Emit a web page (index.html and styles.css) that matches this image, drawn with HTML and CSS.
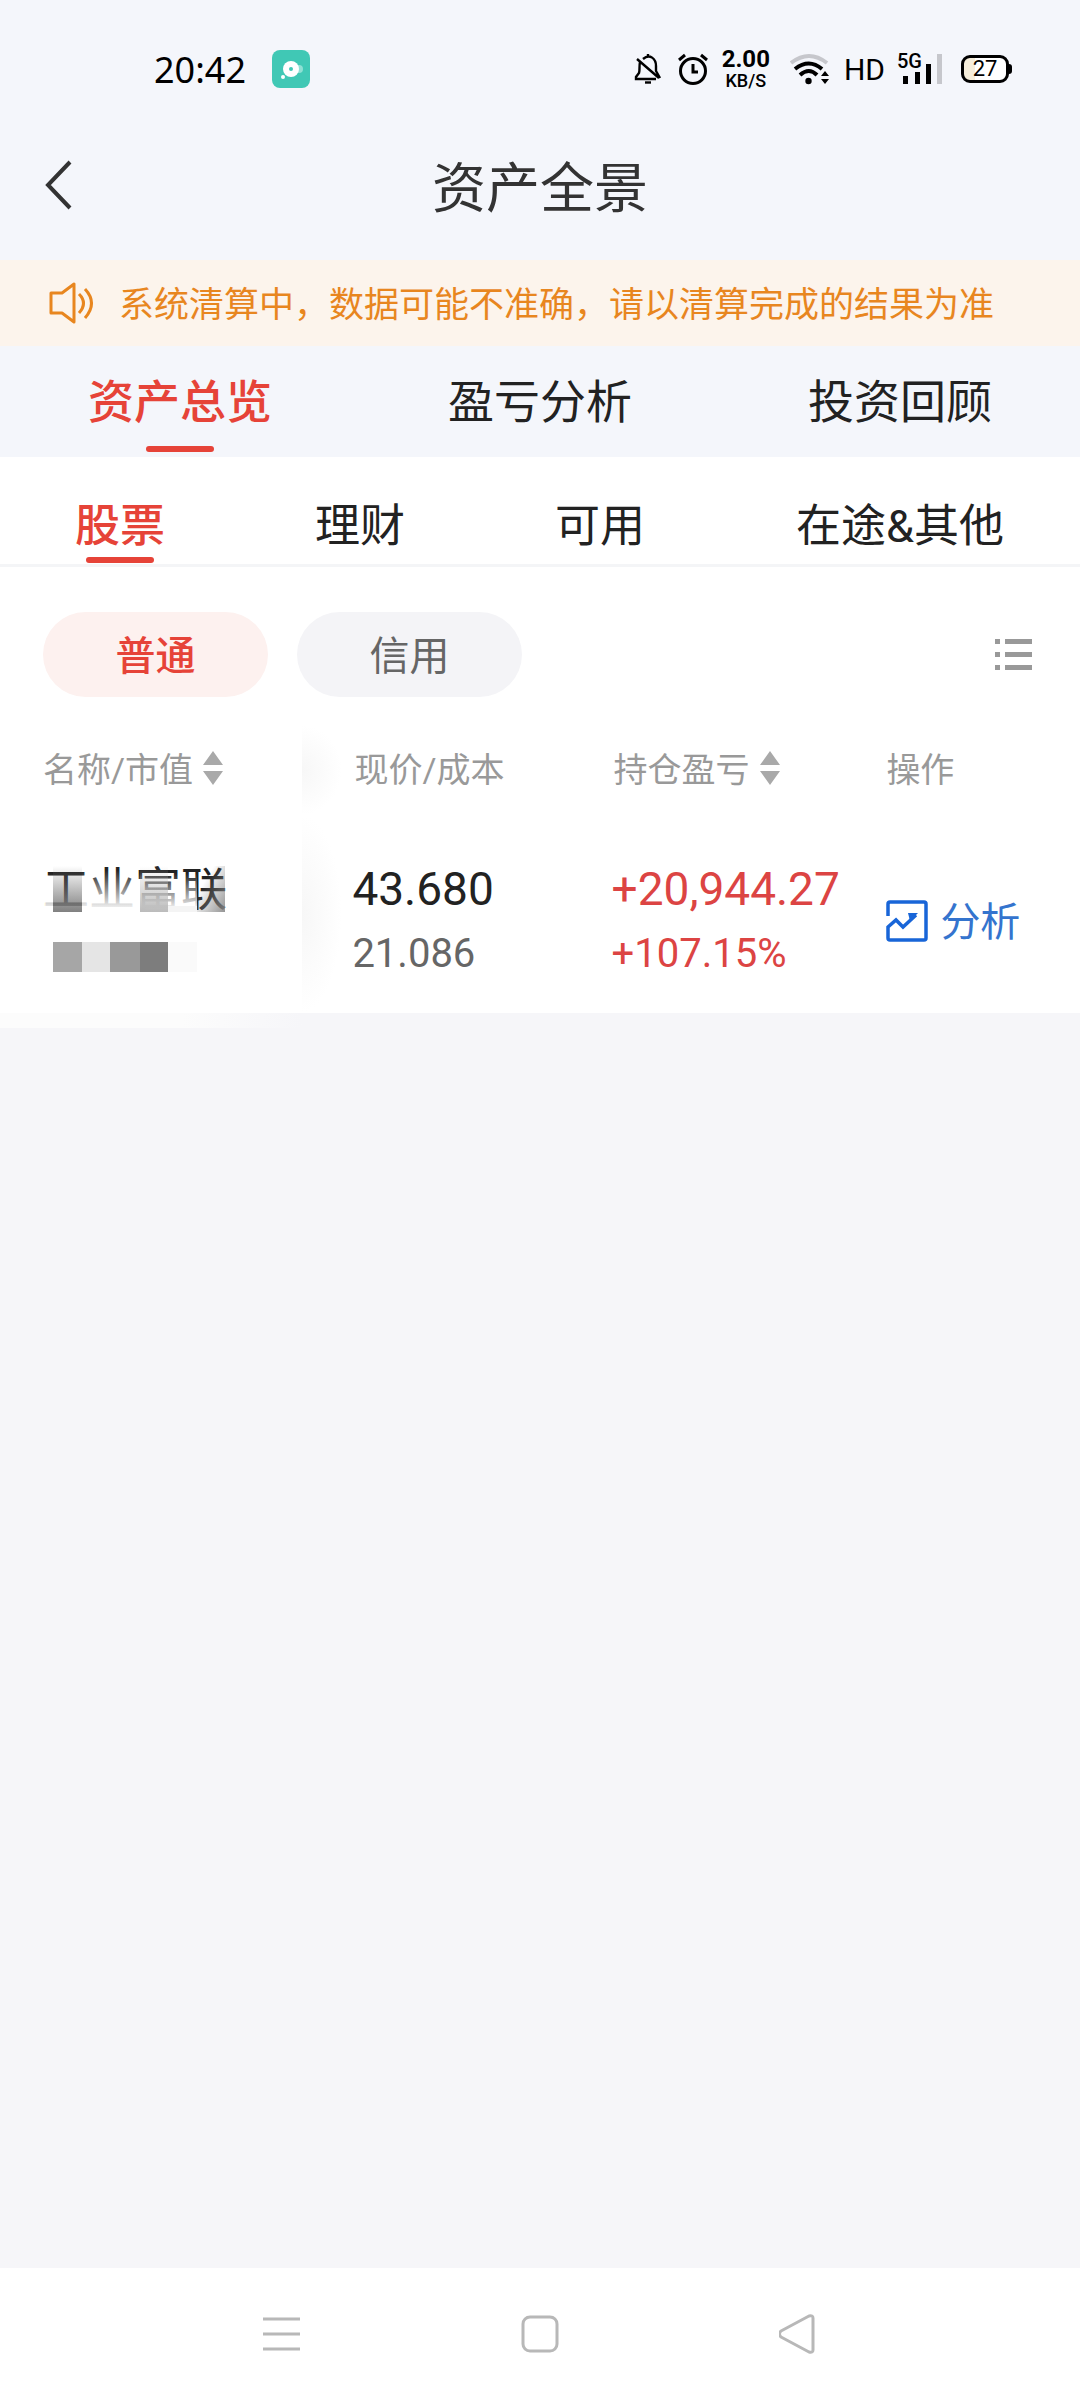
FILE: index.html
```html
<!DOCTYPE html>
<html lang="zh-CN">
<head>
    <meta charset="UTF-8">
    <meta name="viewport" content="width=device-width, initial-scale=1.0">
    <title>资产全景</title>
    <link rel="stylesheet" href="styles.css">
</head>
<body>
    <div class="status-bar">
        <div class="status-left">
            <span class="time">20:42</span>
            <svg width="38" height="38" viewBox="0 0 38 38">
                <rect width="38" height="38" rx="8" fill="#40c8b5"/>
                <circle cx="27" cy="19" r="4" fill="#8fe0d4"/>
                <circle cx="19" cy="19" r="8" fill="#fff"/>
                <circle cx="11" cy="27" r="2" fill="#fff"/>
                <circle cx="19" cy="19" r="2" fill="#40c8b5"/>
            </svg>
        </div>
        <div class="status-right">
            <svg class="bell" width="28" height="32" viewBox="0 0 28 32" fill="none" stroke="#000" stroke-width="2.4">
                <path d="M9 6C16 0 22 6 22 13v5l4 7M6 9c-1 4 0 8-1 11l-3 4v2h20M3 6l22 19M14 1v3"/>
                <path d="M11 29.500h6"/>
            </svg>
            <svg class="alarm" width="30" height="32" viewBox="0 0 30 32" fill="none" stroke="#000" stroke-width="3">
                <circle cx="15" cy="18" r="12.500"/>
                <path d="M15 11v8h5M1 7l6-5M29 7l-6-5"/>
            </svg>
            <div class="speed">
                <span class="speed-value">2.00</span>
                <span class="speed-unit">KB/S</span>
            </div>
            <svg class="wifi" width="40" height="32" viewBox="0 0 40 32" fill="none" stroke="#000" stroke-width="4">
                <path d="M1 10Q19-4 37 10" stroke="#c6c7cc"/>
                <path d="M5 16q14-11 27 0M10 22q9-8 17 0"/>
                <circle cx="18.500" cy="28" r="3.200" fill="#000" stroke="none"/>
                <path d="M31 23l4-5 4 5zM31 26l4 5 4-5z" fill="#000" stroke="none"/>
            </svg>
            <span class="hd">HD</span>
            <div class="signal">
                <span class="signal-type">5G</span>
                <svg width="46" height="32" viewBox="0 0 46 32">
                    <path d="M6 23h5v8H6zM18 19h5v12h-5zM29 11h5v20h-5z"/>
                    <path d="M40 1h5v30h-5z" fill="#c6c7cc"/>
                </svg>
            </div>
            <div class="battery">27</div>
        </div>
    </div>

    <header class="header">
        <button class="back-btn" aria-label="返回">
            <svg width="28" height="50" viewBox="0 0 28 50" fill="none" stroke="#333" stroke-width="4">
                <path d="M25 2L3 25l22 23"/>
            </svg>
        </button>
        <h1>资产全景</h1>
    </header>

    <div class="notice">
        <svg width="46" height="42" viewBox="0 0 46 42" fill="none" stroke="#e8861f" stroke-width="3" stroke-linejoin="round">
            <path d="M2 11h11L25 2v38L13 31H2zM30 12q9 9 0 19M36 7q13 14 0 29"/>
        </svg>
        <p>系统清算中，数据可能不准确，请以清算完成的结果为准</p>
    </div>

    <nav class="main-tabs">
        <button class="tab active">资产总览</button>
        <button class="tab">盈亏分析</button>
        <button class="tab">投资回顾</button>
    </nav>

    <main class="panel">
        <nav class="sub-tabs">
            <button class="tab active">股票</button>
            <button class="tab">理财</button>
            <button class="tab">可用</button>
            <button class="tab wide">在途&amp;其他</button>
        </nav>

        <div class="filters">
            <button class="pill active">普通</button>
            <button class="pill">信用</button>
            <button class="list-btn" aria-label="列表">
                <svg width="38" height="34" viewBox="0 0 38 34" fill="#999">
                    <path d="M0 1h5v5H0zM10 1h27v5H10zM0 14h5v5H0zM10 14h27v5H10zM0 27h5v5H0zM10 27h27v5H10z"/>
                </svg>
            </button>
        </div>

        <table class="holdings">
            <thead>
                <tr>
                    <th class="fixed">
                        <button class="sort-btn">名称/市值
                            <svg width="20" height="34" viewBox="0 0 20 34" fill="#a9a9a9"><path d="M10 0l10 14H0zM0 20h20L10 34z"/></svg>
                        </button>
                    </th>
                    <th>现价/成本</th>
                    <th>
                        <button class="sort-btn">持仓盈亏
                            <svg width="20" height="34" viewBox="0 0 20 34" fill="#a9a9a9"><path d="M10 0l10 14H0zM0 20h20L10 34z"/></svg>
                        </button>
                    </th>
                    <th>操作</th>
                </tr>
            </thead>
            <tbody>
                <tr>
                    <td class="fixed">
                        <div class="stock">
                            <span class="line-main">工业富联</span>
                            <!-- mosaic over the name -->
                            <svg class="mosaic" width="190" height="58" viewBox="0 0 190 58">
                                <defs>
                                    <linearGradient id="fade" x1="0" y1="0" x2="0" y2="1">
                                        <stop offset="0.150" stop-color="#fff" stop-opacity="0"/>
                                        <stop offset="0.850" stop-color="#fff" stop-opacity="0.900"/>
                                        <stop offset="1" stop-color="#fff"/>
                                    </linearGradient>
                                    <linearGradient id="dark" x1="0" y1="0" x2="0" y2="1">
                                        <stop offset="0" stop-color="#808080" stop-opacity="0"/>
                                        <stop offset="1" stop-color="#808080"/>
                                    </linearGradient>
                                    <linearGradient id="mid" x1="0" y1="0" x2="0" y2="1">
                                        <stop offset="0" stop-color="#bbb" stop-opacity="0"/>
                                        <stop offset="1" stop-color="#bbb"/>
                                    </linearGradient>
                                    <linearGradient id="corner" x1="0" y1="0" x2="1" y2="1">
                                        <stop offset="0.300" stop-color="#888" stop-opacity="0"/>
                                        <stop offset="1" stop-color="#888" stop-opacity="0.900"/>
                                    </linearGradient>
                                </defs>
                                <rect x="0" y="10" width="8" height="48" fill="url(#fade)"/>
                                <rect x="37" y="6" width="54" height="52" fill="url(#fade)"/>
                                <rect x="91" y="10" width="61" height="48" fill="url(#fade)"/>
                                <rect x="8" y="10" width="29" height="46" fill="url(#dark)"/>
                                <rect x="95" y="10" width="28" height="46" fill="url(#mid)"/>
                                <rect x="123" y="50" width="29" height="6" fill="#f4f4f4"/>
                                <rect x="152" y="10" width="28" height="46" fill="url(#corner)"/>
                            </svg>
                            <!-- hidden market value -->
                            <svg class="masked-value" width="180" height="30" viewBox="0 0 180 30">
                                <rect x="8" width="29" height="30" fill="#a6a6a6"/>
                                <rect x="37" width="28" height="30" fill="#e5e5e5"/>
                                <rect x="65" width="30" height="30" fill="#999"/>
                                <rect x="95" width="28" height="30" fill="#7d7d7d"/>
                                <rect x="123" width="29" height="30" fill="#fafafa"/>
                            </svg>
                        </div>
                    </td>
                    <td>
                        <div class="line-main">43.680</div>
                        <div class="line-sub">21.086</div>
                    </td>
                    <td class="profit">
                        <div class="line-main">+20,944.27</div>
                        <div class="line-sub">+107.15%</div>
                    </td>
                    <td>
                        <a class="analyze" href="#">
                            <svg width="42" height="42" viewBox="0 0 42 42" fill="none" stroke="#1865d8" stroke-width="3.500">
                                <path d="M2 16V4q0-2 2-2h34q2 0 2 2v34q0 2-2 2H4q-2 0-2-2V27l8-7 7 7 13-12"/>
                                <path d="M22 13h10l-8 8z" fill="#1865d8" stroke="none"/>
                            </svg>
                            <span>分析</span>
                        </a>
                    </td>
                </tr>
            </tbody>
        </table>
    </main>

    <footer class="system-nav">
        <button aria-label="菜单">
            <svg width="38" height="40" viewBox="0 0 38 40" stroke="#b8b8b8" stroke-width="3">
                <path d="M0 5h37M0 20h37M0 35h37"/>
            </svg>
        </button>
        <button aria-label="主页">
            <svg width="38" height="40" viewBox="0 0 38 40" fill="none" stroke="#b8b8b8" stroke-width="3">
                <rect x="2" y="3" width="34" height="34" rx="7"/>
            </svg>
        </button>
        <button aria-label="返回">
            <svg width="38" height="40" viewBox="0 0 38 40" fill="none" stroke="#b8b8b8" stroke-width="3" stroke-linejoin="round">
                <path d="M2 17q-3 3 0 6l28 15q4 1 4-2V4q0-3-4-2z"/>
            </svg>
        </button>
    </footer>
</body>
</html>
```

FILE: styles.css
```css
* {
    box-sizing: border-box;
    margin: 0;
    padding: 0;
}

body {
    display: flex;
    flex-direction: column;
    min-height: 100vh;
    font-family: Roboto, 'Noto Sans CJK SC', sans-serif;
    color: #222;
    background: #f6f6f9;
}

svg {
    display: block;
    flex-shrink: 0;
}

button {
    border: none;
    background: none;
    font: inherit;
    color: inherit;
    cursor: pointer;
}

.status-bar {
    display: flex;
    justify-content: space-between;
    padding: 42px 71px 20px 154px;
    background: #f4f6fb;
    color: #000;
}

.status-left,
.status-right {
    display: flex;
    align-items: center;
    height: 54px;
}

.status-left {
    gap: 26px;
}

.time {
    font-family: 'Noto Sans', sans-serif;
    font-size: 36px;
}

.bell {
    margin-right: 16px;
}

.alarm {
    margin-right: 14px;
}

.speed {
    display: flex;
    flex-direction: column;
    align-items: center;
    margin-right: 20px;
    font-weight: 500;
}

.speed-value {
    font-size: 24px;
    line-height: 24px;
    font-weight: 700;
}

.speed-unit {
    font-size: 18px;
    line-height: 20px;
}

.wifi {
    margin-right: 14px;
}

.hd {
    margin-right: 12px;
    font-size: 30px;
}

.signal {
    position: relative;
    margin-right: 18px;
}

.signal-type {
    position: absolute;
    top: 0;
    left: 0;
    font-size: 20px;
    line-height: 16px;
    font-weight: 500;
}

.battery {
    position: relative;
    width: 48px;
    height: 28px;
    border: 3px solid #000;
    border-radius: 9px;
    background: linear-gradient(to right, #f6eedb 27%, #fff 27%);
    font-size: 22px;
    line-height: 22px;
    text-align: center;
}

.battery::after {
    content: '';
    position: absolute;
    top: 6px;
    right: -6px;
    width: 3px;
    height: 10px;
    border-radius: 0 3px 3px 0;
    background: #000;
}

.header {
    display: grid;
    grid-template-columns: 1fr auto 1fr;
    align-items: center;
    height: 144px;
    padding: 0 45px 6px;
    background: #f4f6fb;
}

.back-btn {
    justify-self: start;
}

.header h1 {
    padding-top: 10px;
    font-size: 54px;
    line-height: 80px;
    font-weight: 400;
    color: #333;
}

.notice {
    display: flex;
    align-items: center;
    gap: 24px;
    height: 86px;
    padding-left: 49px;
    background: #fcf4ec;
    color: #e8861f;
    font-size: 35px;
    white-space: nowrap;
}

.notice p {
    padding-bottom: 4px;
}

.main-tabs,
.sub-tabs {
    display: flex;
}

.main-tabs {
    padding: 26px 0 5px;
    background: #f4f6fb;
}

.sub-tabs {
    padding: 40px 0 1px;
    border-bottom: 3px solid #f4f5f7;
}

.tab {
    flex: 2;
    font-size: 46px;
    line-height: 60px;
}

.tab.wide {
    flex: 3;
}

.tab::after {
    content: '';
    display: block;
    width: 68px;
    height: 6px;
    margin: 14px auto 0;
    border-radius: 3px;
}

.sub-tabs .tab {
    font-size: 45px;
}

.sub-tabs .tab::after {
    margin-top: 0;
}

.tab.active {
    color: #e64338;
    font-weight: 500;
}

.tab.active::after {
    background: #e64338;
}

.panel {
    background: #fff;
}

.filters {
    display: flex;
    align-items: center;
    gap: 29px;
    padding: 45px 47px 28px 43px;
}

.pill {
    width: 225px;
    height: 85px;
    padding-bottom: 4px;
    border-radius: 43px;
    background: #f4f4f7;
    color: #666;
    font-size: 40px;
}

.pill.active {
    background: #fdf1ef;
    color: #e64338;
    font-weight: 500;
}

.list-btn {
    margin-left: auto;
}

.holdings {
    width: 100%;
    table-layout: fixed;
    border-collapse: collapse;
}

.holdings th {
    width: 24%;
    height: 90px;
    padding: 0 0 5px 52px;
    color: #999;
    font-size: 34px;
    font-weight: 400;
    text-align: left;
    white-space: nowrap;
}

.holdings th:nth-child(3) {
    width: 26%;
}

.holdings th:last-child {
    width: 22%;
}

.holdings td {
    padding: 41px 0 27px 50px;
    white-space: nowrap;
}

.holdings th:last-child,
.holdings td:last-child {
    padding-left: 44px;
}

.holdings .fixed {
    position: relative;
    width: 28%;
    padding-left: 43px;
}

.holdings .fixed::after {
    content: '';
    position: absolute;
    top: 0;
    bottom: 0;
    left: 100%;
    width: 40px;
    background: radial-gradient(ellipse at left, #f7f7f7, #fff 70%);
}

/* and its light overlap on the page below */
.holdings td.fixed::before {
    content: '';
    position: absolute;
    top: 100%;
    left: 0;
    width: 100%;
    height: 15px;
    background: linear-gradient(to right, #fcfcfc 60%, #f6f6f9);
}

.sort-btn {
    display: flex;
    align-items: center;
    gap: 10px;
}

.stock {
    position: relative;
}

.mosaic {
    position: absolute;
    top: 0;
    left: 2px;
}

.masked-value {
    margin: 20px 0 14px 2px;
}

.line-main {
    display: block;
    font-size: 46px;
    line-height: 66px;
}

.line-sub {
    color: #666;
    font-size: 40px;
    line-height: 64px;
}

.profit,
.profit .line-sub {
    color: #dc4443;
}

.analyze {
    display: flex;
    align-items: center;
    gap: 12px;
    color: #3474ce;
    font-size: 40px;
    text-decoration: none;
}

.analyze span {
    padding-bottom: 4px;
}

.system-nav {
    display: flex;
    justify-content: center;
    align-items: center;
    gap: 220px;
    height: 132px;
    margin-top: auto;
    background: #fff;
}
```
